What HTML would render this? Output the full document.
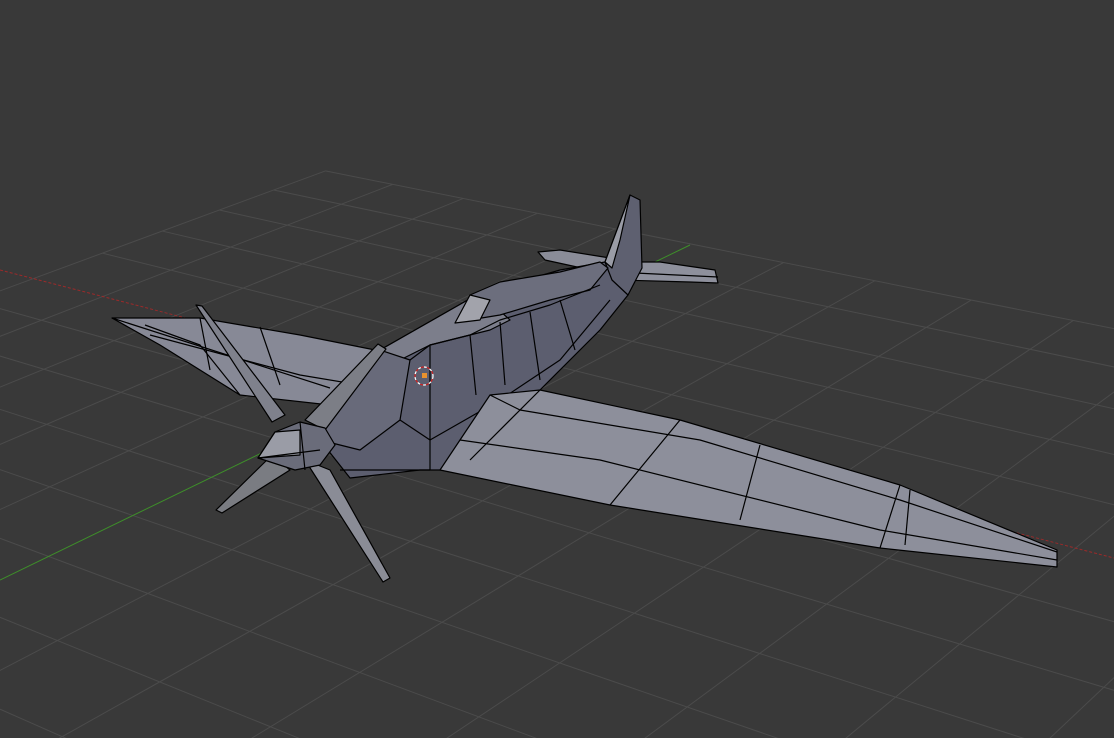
<!DOCTYPE html>
<html><head><meta charset="utf-8"><style>
html,body{margin:0;padding:0;background:#393939;overflow:hidden;width:1114px;height:738px}
svg{display:block}
</style></head><body>
<svg id="s" width="1114" height="738" viewBox="0 0 1114 738" xmlns="http://www.w3.org/2000/svg">
<rect width="1114" height="738" fill="#393939"/>
<g id="grid" stroke="#4b4b4b" stroke-width="1" fill="none"></g>
<line x1="0" y1="270" x2="1114" y2="558" stroke="#9a2a2a" stroke-width="1" stroke-dasharray="3,2"/>
<line x1="0" y1="580" x2="690" y2="245" stroke="#3e8e2a" stroke-width="1"/>
<g stroke="#000" stroke-width="1.2" stroke-linejoin="round">
<polygon points="112,318 200,318 300,335 385,352 360,400 330,405 240,395 160,345" fill="#878996"/>
<polyline points="112,318 330,388" fill="none"/>
<polyline points="150,335 300,375 360,385" fill="none"/>
<polyline points="145,325 200,345 240,395" fill="none"/>
<polyline points="200,318 210,370" fill="none"/>
<polyline points="260,327 280,385" fill="none"/>
<polygon points="538,252 560,250 610,258 612,272 600,272 545,260" fill="#8a8c98"/>
<polygon points="612,262 660,262 715,270 718,283 690,282 620,280 612,272" fill="#8e909c"/>
<polyline points="615,272 718,277" fill="none"/>
<polygon points="605,262 630,195 640,200 642,268 628,295 610,282" fill="#5e6070"/>
<polygon points="605,262 630,195 620,240 612,268" fill="#9a9ca6"/>
<polygon points="325,400 380,350 480,293 560,270 605,262 612,280 628,295 600,330 540,390 440,470 420,470 350,478 320,440" fill="#5c5e6f"/>
<polygon points="380,350 480,293 510,320 490,330 430,345 400,360" fill="#7c7e8b"/>
<polygon points="457,322 470,295 500,282 560,272 600,262 608,268 590,290 550,300 500,315" fill="#6c6e7d"/>
<polygon points="455,323 470,295 490,300 480,320" fill="#a2a3ab"/>
<polygon points="330,400 380,350 410,360 400,420 360,450 320,440" fill="#686a7a"/>
<polyline points="410,360 430,345 470,335 500,320 550,305 600,285" fill="none"/>
<polyline points="400,420 430,440 500,400 560,360 610,300" fill="none"/>
<polyline points="430,345 430,470" fill="none"/>
<polyline points="470,335 476,395" fill="none"/>
<polyline points="500,322 505,385" fill="none"/>
<polyline points="530,312 540,380" fill="none"/>
<polyline points="560,300 575,350" fill="none"/>
<polyline points="340,470 430,470" fill="none"/>
<polygon points="490,395 540,390 680,420 900,485 1057,550 1057,567 880,548 610,505 440,470 460,440" fill="#8d8f9b"/>
<polyline points="460,440 600,460 880,530 1057,560" fill="none"/>
<polyline points="490,395 520,410 700,440 900,500 1057,552" fill="none"/>
<polyline points="680,420 610,505" fill="none"/>
<polyline points="900,485 880,548" fill="none"/>
<polyline points="910,490 905,545" fill="none"/>
<polyline points="540,390 470,460" fill="none"/>
<polyline points="760,445 740,520" fill="none"/>
<polygon points="196,305 202,306 285,415 272,422" fill="#7f818c"/>
<polygon points="378,344 386,349 325,430 305,420" fill="#7c7e86"/>
<polygon points="216,510 222,513 290,470 272,455" fill="#7a7c82"/>
<polygon points="383,582 390,578 330,470 305,460" fill="#8a8c96"/>
<polygon points="258,458 275,432 300,422 325,428 335,445 320,465 295,470" fill="#6a6c7a"/>
<polygon points="258,458 275,432 300,430 300,455" fill="#9a9ca6"/>
<polyline points="258,458 320,450" fill="none"/>
<polyline points="300,422 305,470" fill="none"/>
</g>
<circle cx="424" cy="376" r="9" fill="none" stroke="#fff" stroke-width="1.2" stroke-dasharray="3,3"/>
<circle cx="424" cy="376" r="9" fill="none" stroke="#d02020" stroke-width="1.2" stroke-dasharray="3,3" stroke-dashoffset="3"/>
<rect x="422" y="373" width="5" height="5" fill="#e8922e"/>
</svg>
<script>
(function(){
var O=[424,378], VR=[-2500,-394], VG=[2500,-631], k=33;
var gMin=-14,gMax=5,rMin=-14,rMax=5;
function along(V,t){var dx=V[0]-O[0],dy=V[1]-O[1];var f=t/(t+k);return [O[0]+dx*f,O[1]+dy*f];}
function inter(a,b,c,d){var x1=a[0],y1=a[1],x2=b[0],y2=b[1],x3=c[0],y3=c[1],x4=d[0],y4=d[1];
var den=(x1-x2)*(y3-y4)-(y1-y2)*(x3-x4);var p=(x1*y2-y1*x2),q=(x3*y4-y3*x4);
return [(p*(x3-x4)-(x1-x2)*q)/den,(p*(y3-y4)-(y1-y2)*q)/den];}
var g=document.getElementById('grid'),h='';
var R0=along(VR,rMin),R1=along(VR,rMax),G0=along(VG,gMin),G1=along(VG,gMax);
for(var i=gMin;i<=gMax;i++){
 var gp=along(VG,i);
 var a=inter(VR,gp,VG,R0),b=inter(VR,gp,VG,R1);
 if(i!==0)h+='<line x1="'+a[0]+'" y1="'+a[1]+'" x2="'+b[0]+'" y2="'+b[1]+'"/>';
}
for(var j=rMin;j<=rMax;j++){
 var rp=along(VR,j);
 var c=inter(VG,rp,VR,G0),d=inter(VG,rp,VR,G1);
 if(j!==0)h+='<line x1="'+c[0]+'" y1="'+c[1]+'" x2="'+d[0]+'" y2="'+d[1]+'"/>';
}
g.innerHTML=h;
})();
</script>
</body></html>
